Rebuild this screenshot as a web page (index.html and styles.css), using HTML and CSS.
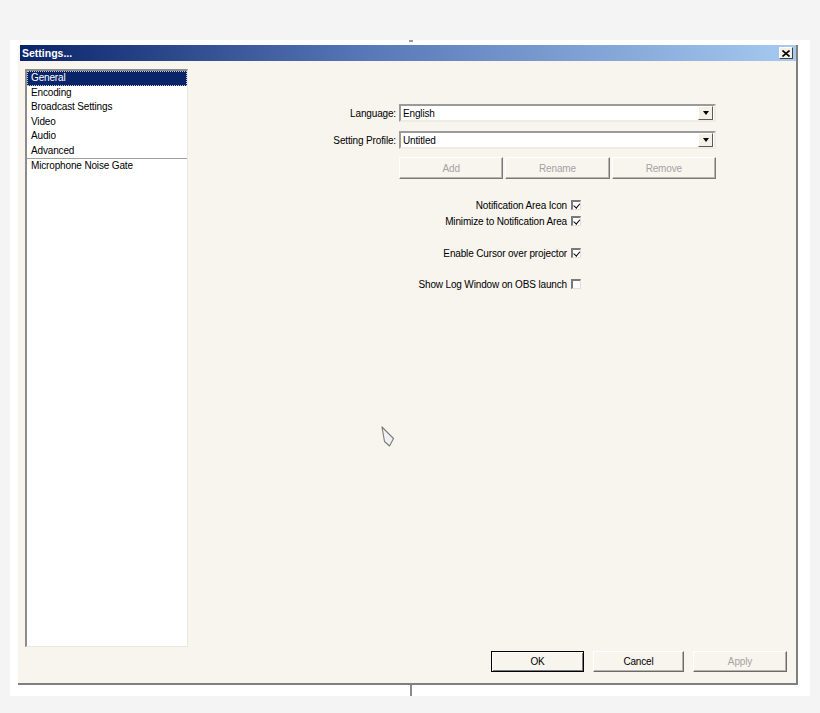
FILE: index.html
```html
<!DOCTYPE html>
<html lang="en">

<head>
    <meta charset="utf-8">
    <meta name="viewport" content="width=device-width, initial-scale=1.0">
    <title>Settings</title>
    <link rel="stylesheet" href="styles.css">
</head>

<body>
    <div class="frame">
        <div class="dialog">
            <header class="titlebar">
                <span>Settings...</span>
                <button class="close" aria-label="Close">
                    <svg width="8" height="7" viewBox="0 0 8 7">
                        <path d="M0.5 0.5 L7.5 6.5 M7.5 0.5 L0.5 6.5" stroke="#000" stroke-width="1.6" />
                    </svg>
                </button>
            </header>

            <div class="content">
                <ul class="pages">
                    <li class="valgt">General</li>
                    <li>Encoding</li>
                    <li>Broadcast Settings</li>
                    <li>Video</li>
                    <li>Audio</li>
                    <li>Advanced</li>
                    <li class="plugin">Microphone Noise Gate</li>
                </ul>

                <section class="panel">
                    <div class="form">
                        <label>Language:</label>
                        <div class="combo"><span>English</span><i class="arrow"></i></div>

                        <label>Setting Profile:</label>
                        <div class="combo"><span>Untitled</span><i class="arrow"></i></div>

                        <span></span>
                        <div class="profile-knapper">
                            <button disabled>Add</button>
                            <button disabled>Rename</button>
                            <button disabled>Remove</button>
                        </div>
                    </div>

                    <div class="checks">
                        <label class="check">Notification Area Icon <span class="box on"></span></label>
                        <label class="check">Minimize to Notification Area <span class="box on"></span></label>
                        <label class="check spaced">Enable Cursor over projector <span class="box on"></span></label>
                        <label class="check spaced">Show Log Window on OBS launch <span class="box"></span></label>
                    </div>
                </section>
            </div>

            <footer class="footer">
                <button class="ok">OK</button>
                <button class="cancel">Cancel</button>
                <button class="apply" disabled>Apply</button>
            </footer>
        </div>

        <svg class="cursor" width="15" height="22" viewBox="0 0 15 22">
            <path d="M1 1 L3.5 15.5 L8.5 20 L12.5 12.5 Z" fill="#eef0f3" stroke="#7a7a7a" stroke-width="1.1" stroke-linejoin="round" />
        </svg>
    </div>
</body>

</html>
```

FILE: styles.css
```css
* {
    box-sizing: border-box;
    margin: 0px;
    padding: 0px;
}

body {
    background-color: #f4f4f4;
    font-family: "Liberation Sans", Arial, sans-serif;
    font-size: 10px;
    letter-spacing: -0.15px;
    color: #000;
}

button {
    font-family: inherit;
    font-size: inherit;
    letter-spacing: inherit;
    color: inherit;
    background-color: transparent;
}

.frame {
    position: relative;
    width: 800px;
    height: 656px;
    margin: 40px 0px 0px 10px;
    padding: 5px 12px 11px 8px;
    background-color: #fff;
}

/* little bits of the window behind */
.frame::before {
    content: "";
    position: absolute;
    left: 399px;
    top: 0px;
    width: 4px;
    height: 2px;
    background-color: #9a9a9a;
}

.frame::after {
    content: "";
    position: absolute;
    left: 400px;
    top: 645px;
    width: 2px;
    height: 11px;
    background-color: #8a8a8a;
}

.dialog {
    height: 100%;
    display: flex;
    flex-direction: column;
    background-color: #f8f4ee;
    border-right: 2px solid #808080;
    border-bottom: 2px solid #808080;
}

.titlebar {
    height: 16px;
    margin-left: 2px;
    padding: 0px 3px 0px 2px;
    display: flex;
    align-items: center;
    justify-content: space-between;
    background: linear-gradient(to right, #0a246a, #5878b8 45%, #a6caf0);
    color: #fff;
    font-weight: bold;
    font-size: 10.5px;
    letter-spacing: 0px;
}

.close {
    width: 14px;
    height: 12px;
    display: flex;
    align-items: center;
    justify-content: center;
    background-color: #f4f0e8;
    border: 1px solid;
    border-color: #fff #404040 #404040 #fff;
}

.content {
    flex: 1;
    display: flex;
    padding: 8px 0px 0px 7px;
}

/* page list on the left */
.pages {
    width: 163px;
    list-style: none;
    background-color: #fff;
    border-top: 2px solid #8c8c8c;
    border-left: 2px solid #8c8c8c;
    border-right: 1px solid #ebe7df;
    border-bottom: 1px solid #ebe7df;
}

.pages li {
    height: 14.5px;
    line-height: 14.5px;
    padding-left: 4px;
}

.pages .valgt {
    background-color: #0a246a;
    color: #fff;
    outline: 1px dotted #c8c8c8;
    outline-offset: -1px;
}

.pages .plugin {
    height: 15.5px;
    border-top: 1px solid #a0a0a0;
}

.panel {
    flex: 1;
}

.form {
    display: grid;
    grid-template-columns: 208px 317px;
    column-gap: 3px;
    row-gap: 9px;
    margin-top: 35px;
    align-items: center;
}

.form label {
    text-align: right;
}

.combo {
    height: 18px;
    display: flex;
    align-items: center;
    justify-content: space-between;
    padding: 0px 1px 0px 2px;
    background-color: #fff;
    border: 2px solid;
    border-color: #9a9a9a #f0ece4 #f0ece4 #9a9a9a;
}

.arrow {
    width: 15px;
    height: 14px;
    display: flex;
    align-items: center;
    justify-content: center;
    background-color: #f4f0e8;
    border: 1px solid;
    border-color: #fff #5a5a5a #5a5a5a #fff;
}

.arrow::after {
    content: "";
    border-left: 3.5px solid transparent;
    border-right: 3.5px solid transparent;
    border-top: 4px solid #000;
}

.profile-knapper {
    display: flex;
    gap: 2px;
    margin-top: -1px;
}

.profile-knapper button {
    flex: 1;
    height: 22px;
    border: 1px solid;
    border-color: #fff #7a7a7a #7a7a7a #fff;
    box-shadow: inset -1px -1px #b8b4ac;
}

button:disabled {
    color: #a4a4a4;
}

/* tick boxes */
.checks {
    width: 393px;
    margin-top: 18px;
    display: flex;
    flex-direction: column;
    align-items: flex-end;
}

.check {
    height: 16px;
    display: flex;
    align-items: center;
    gap: 4px;
}

.check.spaced {
    margin-top: 16px;
}

.check.spaced:last-child {
    margin-top: 15px;
}

.box {
    width: 10px;
    height: 10px;
    background-color: #fff;
    border-top: 2px solid #7a7a7a;
    border-left: 2px solid #7a7a7a;
    border-right: 1px solid #e4e0d8;
    border-bottom: 1px solid #e4e0d8;
    position: relative;
}

.box.on::after {
    content: "";
    position: absolute;
    left: 1.5px;
    top: -0.5px;
    width: 2.5px;
    height: 4.5px;
    border-right: 1.8px solid #000;
    border-bottom: 1.8px solid #000;
    transform: rotate(40deg);
}

.footer {
    display: flex;
    justify-content: flex-end;
    gap: 9px;
    padding: 4px 9px 11px 0px;
}

.footer button {
    height: 21px;
    border: 1px solid;
    border-color: #fff #6a6a6a #6a6a6a #fff;
    box-shadow: inset -1px -1px #b8b4ac;
}

.footer .ok {
    width: 93px;
    border-color: #000;
    box-shadow: inset 1px 1px #fff, inset -1px -1px #7a7a7a;
}

.footer .cancel {
    width: 91px;
}

.footer .apply {
    width: 94px;
}

.cursor {
    position: absolute;
    left: 371px;
    top: 386px;
}
```
